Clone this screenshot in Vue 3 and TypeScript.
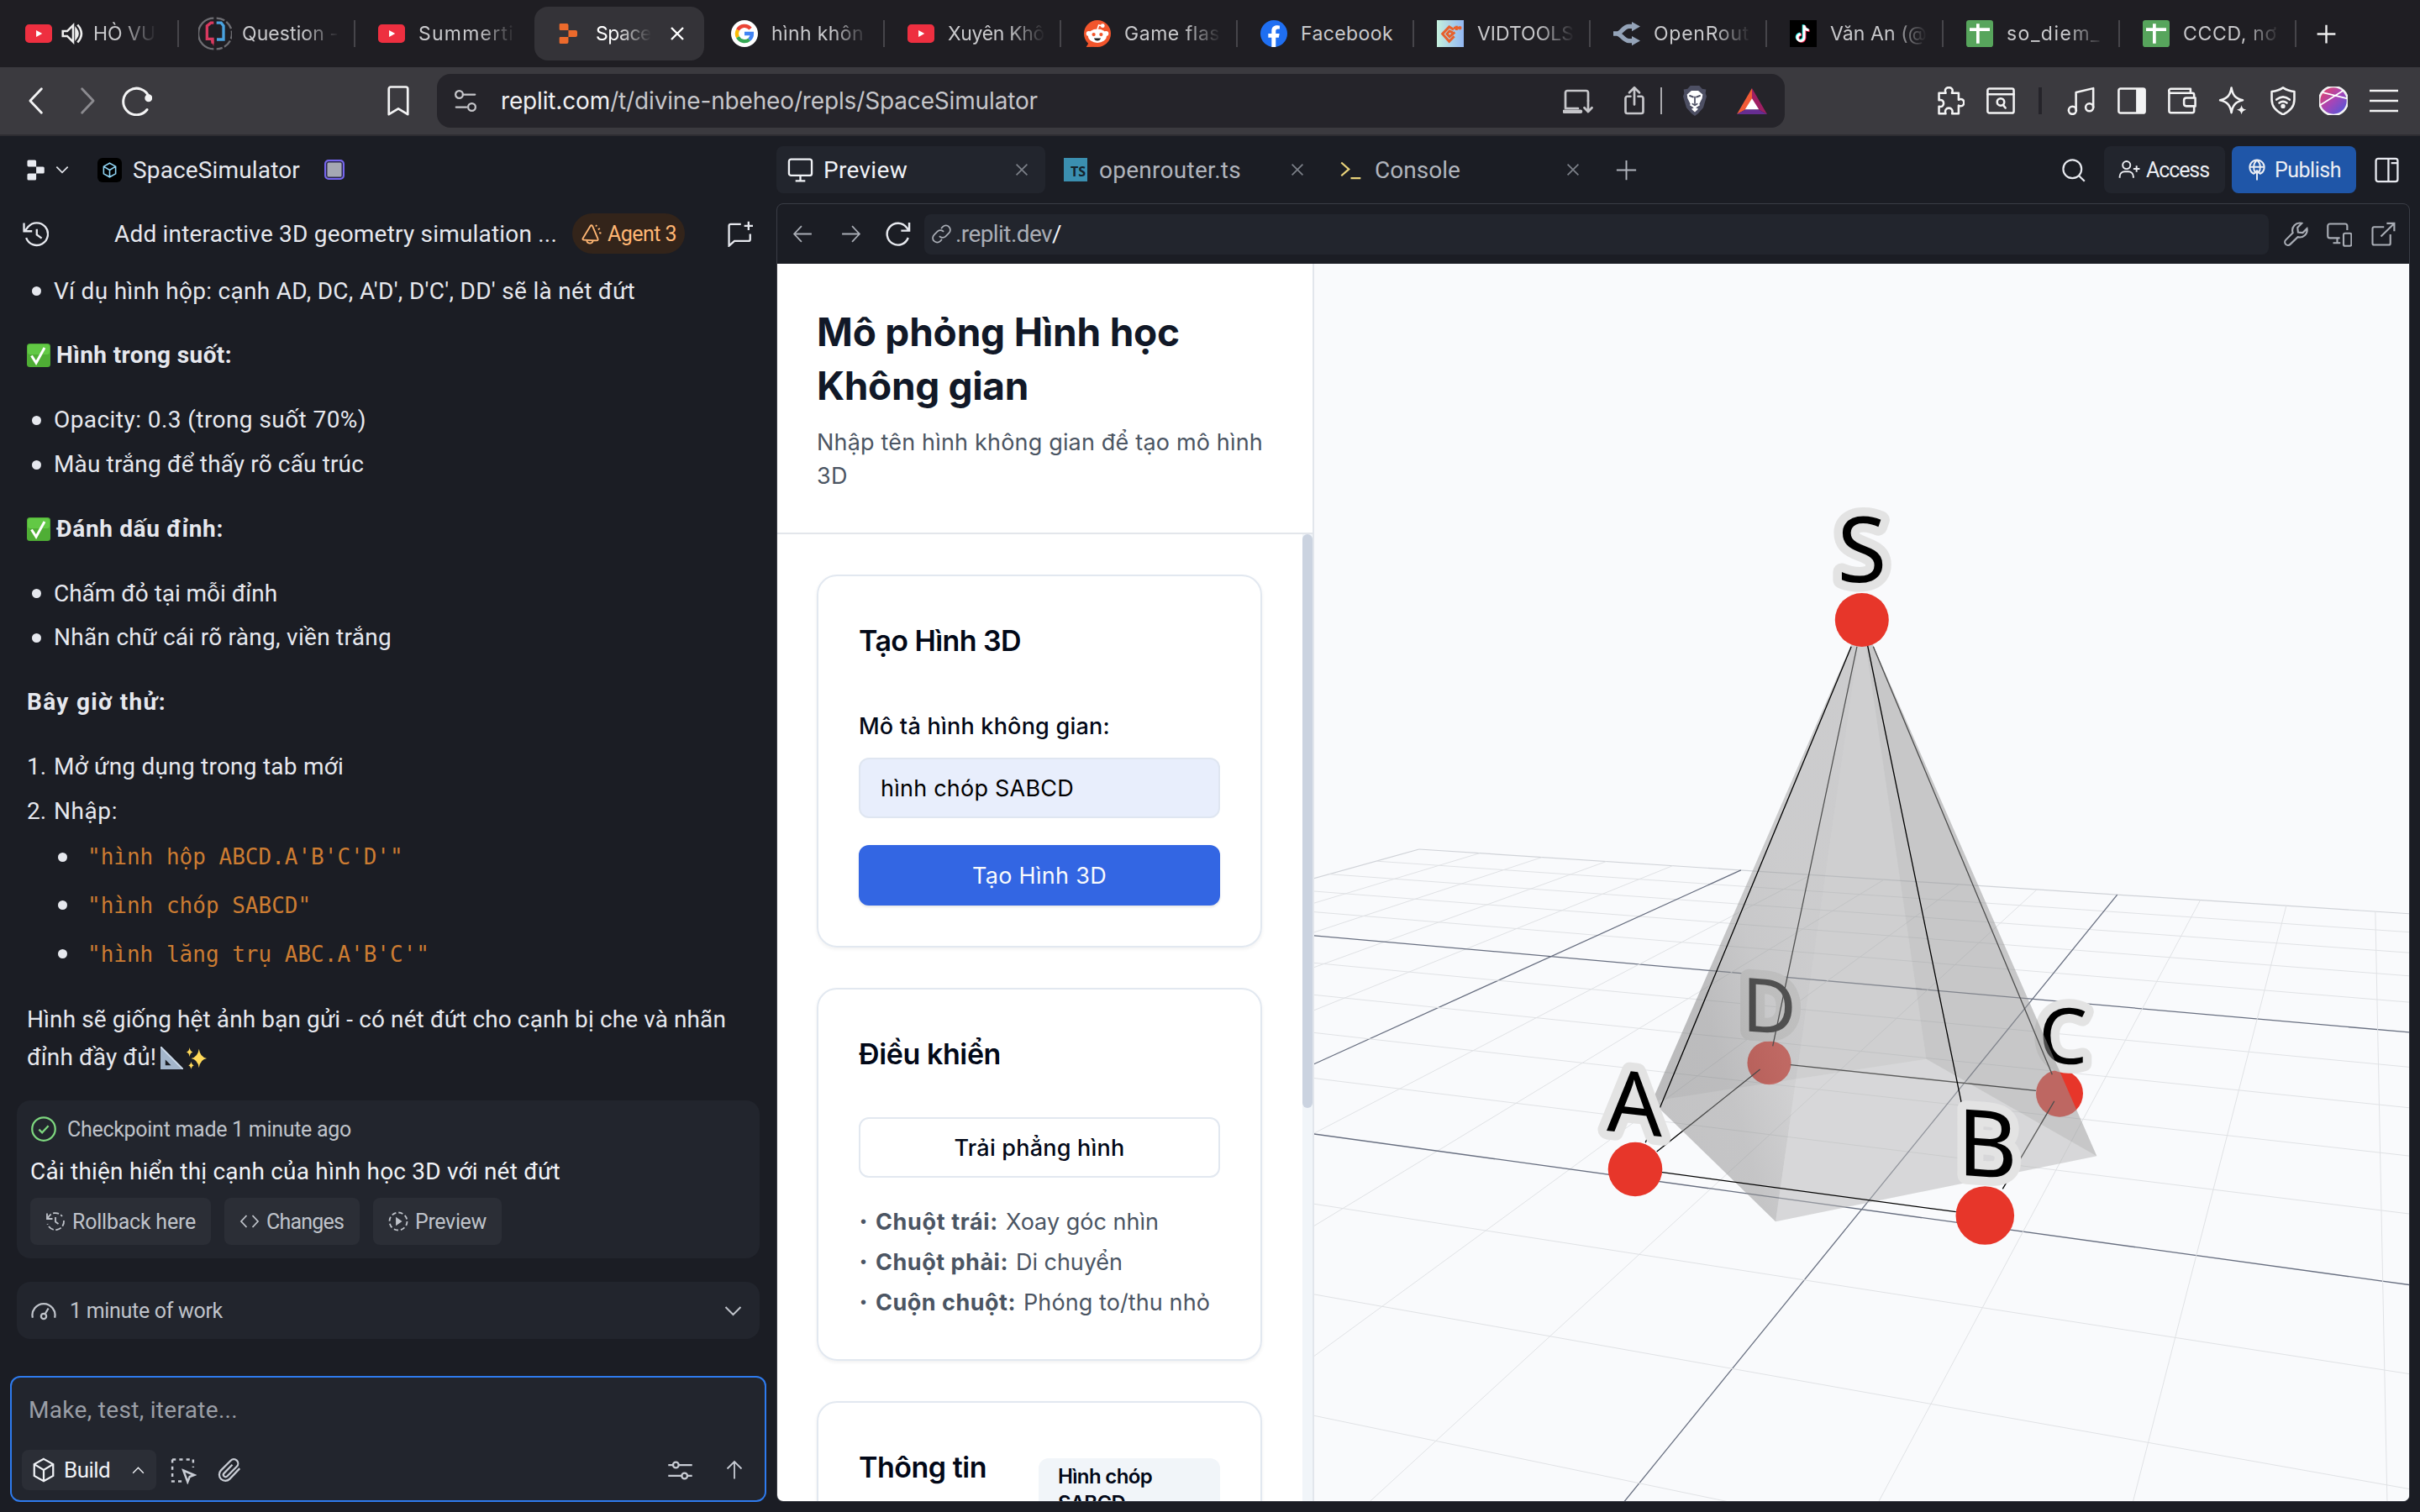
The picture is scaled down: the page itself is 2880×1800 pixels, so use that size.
<script setup lang="ts">
interface BrowserTab {
  icon: string
  title: string
  width: number
  active?: boolean
  sound?: boolean
  divider?: boolean
}

interface Point {
  x: number
  y: number
}

// Tightens or loosens tracking so a label occupies a known width.
const vFit = {
  mounted(el: HTMLElement, binding: { value: number }) {
    const count = Array.from(el.textContent ?? '').length
    const natural = el.getBoundingClientRect().width
    el.style.letterSpacing = `${((binding.value - natural) / count).toFixed(3)}px`
  },
}

const icons: Record<string, string> = {
  youtube:
    '<rect x="0" y="3.8" width="24" height="16.4" rx="3.4" fill="#ee2f40"/><path d="M9.8 9v6l5.400-3z" fill="#fff"/>',
  question:
    '<g fill="none" stroke-width="1.4"><path d="M11 1A11 11 0 0 0 11 23" stroke="#6e6e73"/><path d="M13 1a11 11 0 0 1 0 22" stroke="#6e6e73" stroke-dasharray="6 1.500"/><path d="M11 4.300H9l-2.800 2.200v9.300h4V19" stroke="#d8395f" stroke-width="2"/><path d="M13 4.300h3.300L18 6.500v9.700h-4.800" stroke="#4aa3e0" stroke-width="2"/></g><path d="M8.500 16H11v5z" fill="#d8395f"/>',
  replitOrange:
    '<path d="M4.500 3h5.600a1.500 1.500 0 0 1 1.500 1.500V9H4.500a1 1 0 0 1-1-1V4a1 1 0 0 1 1-1zM11.600 9H18a1.500 1.500 0 0 1 1.500 1.500v3A1.500 1.500 0 0 1 18 15h-6.400zM3.500 16a1 1 0 0 1 1-1h7.100v4.500a1.500 1.500 0 0 1-1.500 1.500H4.500a1 1 0 0 1-1-1z" fill="#ec6a2c"/>',
  google:
    '<circle cx="12" cy="12" r="12" fill="#fff"/><g fill="none" stroke-width="3.200"><path d="M17.300 7.600A6.800 6.800 0 0 0 6 8.800" stroke="#ea4335"/><path d="M6 8.800a6.800 6.800 0 0 0 0 6.400" stroke="#fbbc05"/><path d="M6 15.200a6.800 6.800 0 0 0 10.300 2.100" stroke="#34a853"/><path d="M16.300 17.300a6.600 6.600 0 0 0 2.400-5.300H12" stroke="#4285f4"/></g>',
  reddit:
    '<circle cx="12" cy="12" r="12" fill="#f2552c"/><path d="M2 24l3-5 6 4.800z" fill="#f2552c"/><circle cx="4.300" cy="12" r="2.300" fill="#fff"/><circle cx="19.700" cy="12" r="2.300" fill="#fff"/><ellipse cx="12" cy="14" rx="8.300" ry="6.200" fill="#fff"/><circle cx="8.700" cy="12.800" r="1.600" fill="#f2552c"/><circle cx="15.300" cy="12.800" r="1.600" fill="#f2552c"/><path d="M9 16.200h6q-.6 2.200-3 2.200t-3-2.200z" fill="#222"/><path d="M12 8l1.200-3.500 3 .6" stroke="#fff" fill="none" stroke-width="1.200"/><circle cx="16.700" cy="5" r="1.800" fill="#fff"/>',
  facebook:
    '<circle cx="12" cy="12" r="12" fill="#1f6ff2"/><path d="M10 24v-8.500H7V12h3V9.500c0-3.200 1.900-4.900 4.700-4.900 1.300 0 2.500.2 2.500.2v3h-1.500c-1.500 0-2 .9-2 1.900V12h3.300l-.6 3.500h-2.700V24z" fill="#fff"/>',
  vidtools:
    '<defs><linearGradient id="vid"><stop offset="0" stop-color="#c5f0dd"/><stop offset="1" stop-color="#93b7f2"/></linearGradient></defs><rect width="24" height="24" fill="url(#vid)"/><g fill="none" stroke="#e8602c" stroke-width="2.200"><path d="M15 8.500l-4-2.500-6 6.300 6 6.700 4.500-4.500"/><path d="M14 11l-2.800-1.200L9 12.300l2.300 2.500 4.700-4"/><path d="M15 7h7M17.500 5v4M20.500 5.500v3"/></g>',
  openrouter:
    '<path d="M0 12h3c4 0 6-6.500 11-6.500h4M3 12c4 0 6 6.500 11 6.500h4" fill="none" stroke="#94a3b8" stroke-width="4"/><path d="M16.500 1.500L24 5.700l-7.500 4.200zM16.500 14.200L24 18.400l-7.500 4.200z" fill="#94a3b8"/>',
  tiktok:
    '<rect width="24" height="24" fill="#000"/><g fill="none" stroke-width="2.200"><path d="M12.800 4.500v11a3 3 0 1 1-3-3M12.800 5c.3 2.500 2 3.800 4.200 3.900" stroke="#25f4ee" transform="translate(-.7 -.5)"/><path d="M12.800 4.500v11a3 3 0 1 1-3-3M12.800 5c.3 2.500 2 3.800 4.200 3.900" stroke="#fe2c55" transform="translate(.7 .5)"/><path d="M12.800 4.500v11a3 3 0 1 1-3-3M12.800 5c.3 2.500 2 3.800 4.200 3.900" stroke="#fff"/></g>',
  sheets:
    '<rect width="24" height="24" rx="2.500" fill="#57a55c"/><path d="M9 3.200h2.800v17.600H9zM3 7h18v2.800H3z" fill="#fff"/>',
  speaker:
    '<path d="M1.500 9.500H6l6-6v17l-6-6H1.500z"/><path d="M15 7.500q3.500 4.500 0 9z" fill="currentColor"/><path d="M16.500 3q8 9 0 18"/>',
  close: '<path d="M5 5l14 14M19 5L5 19"/>',
  plus: '<path d="M12 3v18M3 12h18"/>',
  chevLeft: '<path d="M16.500 2L7 12l9.500 10"/>',
  chevRight: '<path d="M7.500 2l9.500 10-9.500 10"/>',
  reload: '<path d="M20 19A10.500 10.500 0 1 1 21.500 9"/><circle cx="21.200" cy="9.800" r="2" fill="currentColor"/>',
  bookmark: '<path d="M4.500 2.500A1.500 1.500 0 0 1 6 1h12a1.500 1.500 0 0 1 1.500 1.500V22.800L12 18.300l-7.500 4.500z"/>',
  tune: '<circle cx="6" cy="6" r="3.500"/><path d="M9.500 6H21M3 18h10"/><circle cx="18" cy="18" r="3.500"/>',
  install: '<path d="M20 12V5.500A1.500 1.500 0 0 0 18.500 4h-15A1.500 1.500 0 0 0 2 5.500V18h10"/><path d="M1 20.500h13" stroke-width="3"/><path d="M20 12v8M17 17.500l3 3.200 3-3.200"/>',
  share: '<path d="M9 8.500H6.500A1.500 1.500 0 0 0 5 10v10.500A1.500 1.500 0 0 0 6.500 22h11a1.500 1.500 0 0 0 1.500-1.500V10a1.500 1.500 0 0 0-1.500-1.500H15"/><path d="M12 15V1.500M8 5.500l4-4 4 4"/>',
  brave:
    '<path d="M8 0h8l2.500 2.500L22 3l-.5 3 1 2.500-3 9L15 22l-3 2-3-2-4.500-4.500-3-9 1-2.500L2 3l3.500-.5z" fill="#4d4f63"/><path d="M9 4h6l4 3-.5 3-2.500 4.500.5 1-4.500 2.500-4.500-2.500.5-1L5.500 10 5 7z" fill="#fff"/><path d="M12 17l3 1.500-3 2.500-3-2.500z" fill="#fff"/><path d="M7.500 8l3 1M16.500 8l-3 1M12 9v5M10 14.500l2 1 2-1" stroke="#4d4f63" stroke-width="1.300" fill="none"/>',
  bat: '<path d="M12 0L0 24l7-4.500 5-9.500z" fill="#f25b36"/><path d="M12 0l12 24-7-4.500L12 10z" fill="#9e1f63"/><path d="M0 24h24l-7-4.500H7z" fill="#662d91"/><path d="M12 9.500l5.500 10h-11z" fill="#fff"/>',
  puzzle: '<path d="M2.500 5.500h5.700c-1.300-3 .3-4.700 2.600-4.700s3.900 1.700 2.600 4.700h5.600v5.600c2.800-1.200 4.500.2 4.500 2.400s-1.700 3.700-4.500 2.500V22.800h-5.500c1-3-.6-4.700-2.700-4.700s-3.700 1.700-2.700 4.700H2.500v-6c2.700.6 3.900-.9 3.900-2.700s-1.200-3.300-3.900-2.700z"/>',
  pageSearch: '<rect x="1" y="1.800" width="22" height="20.500" rx="1.500"/><path d="M1 6.500h22"/><circle cx="12" cy="13" r="3"/><path d="M14 15.500l2 2.500"/>',
  music: '<path d="M7.500 20V5L22 1.500v16"/><circle cx="4.500" cy="20" r="3.200"/><circle cx="18.800" cy="17.500" r="3.200"/>',
  sidePanel: '<rect x="1" y="1.800" width="22" height="20.500" rx="1.500"/><path d="M16.500 2.500h6v19h-6z" fill="currentColor"/>',
  wallet: '<path d="M22 9V7a1.500 1.500 0 0 0-1.500-1.500h-18A1.500 1.500 0 0 1 2.500 2H19v3.500M1 3.500v17A1.500 1.500 0 0 0 2.500 22h18a1.500 1.500 0 0 0 1.500-1.500V17"/><path d="M23 9.500h-7.500a2 2 0 0 0-2 2v3a2 2 0 0 0 2 2H23z"/>',
  sparkle: '<path d="M11 1c1 6.500 3.500 9 9.500 10.500-6 1.500-8.500 4-9.500 10.500-1-6.500-3.500-9-9.500-10.500C7.500 10 10 7.500 11 1z"/><path d="M19.500 15.500c.5 2.500 1.500 3.500 4 4-2.500.5-3.500 1.500-4 4-.5-2.500-1.500-3.500-4-4 2.500-.5 3.500-1.500 4-4z" fill="currentColor" stroke="none"/>',
  vpn: '<path d="M12 1c3 2 6 3 9.500 3.200V11c0 6-4 10-9.500 12.500C6.500 21 2.500 17 2.500 11V4.200C6 4 9 3 12 1z"/><path d="M6.500 11q5.500-4.500 11 0M8.800 13.800q3.200-2.400 6.400 0"/><circle cx="12" cy="16.500" r="1" fill="currentColor"/>',
  avatar:
    '<defs><linearGradient id="av" x1="0" y1="0" x2="1" y2="1"><stop offset=".1" stop-color="#e0456a"/><stop offset=".5" stop-color="#a545b8"/><stop offset="1" stop-color="#3d5be0"/></linearGradient></defs><circle cx="12" cy="12" r="12" fill="url(#av)"/><path d="M1 15.500L20 3.500M3 5l20 5" stroke="#fff" stroke-width="1.200" fill="none"/>',
  menu: '<path d="M0 3.500h24M0 12h24M0 20.500h24"/>',
  replitWhite:
    '<path d="M5 2h6.200a1.300 1.300 0 0 1 1.300 1.300v5.300H5a1.300 1.300 0 0 1-1.300-1.300v-4A1.300 1.300 0 0 1 5 2zM12.500 8.600h6.700a1.300 1.300 0 0 1 1.300 1.300v4.200a1.300 1.300 0 0 1-1.300 1.300h-6.700zM3.700 16.700A1.300 1.300 0 0 1 5 15.400h7.500v5.300a1.300 1.300 0 0 1-1.300 1.300H5a1.300 1.300 0 0 1-1.300-1.300z" fill="#e8eaf0" stroke="none"/>',
  chevDown: '<path d="M4 8l8 8 8-8"/>',
  chevUp: '<path d="M4 16l8-8 8 8"/>',
  cube: '<path d="M12 1.500l9 5v11l-9 5-9-5v-11zM3 6.500l9 5.500 9-5.500M12 12v10.500"/>',
  monitor: '<rect x="1.500" y="2" width="21" height="15" rx="2"/><path d="M12 17v5M7.500 22h9"/>',
  prompt: '<path d="M2 4l8 7-8 7M12 20.500h10.500"/>',
  search: '<circle cx="11" cy="11" r="9"/><path d="M17.500 17.500L23 23"/>',
  userPlus: '<circle cx="9" cy="7" r="4.200"/><path d="M1.500 21v-1.500A5.500 5.500 0 0 1 7 14h4a5.500 5.500 0 0 1 5.500 5.500V21M20 7.500v7M16.500 11h7"/>',
  publish: '<path d="M9 16.800A8 8 0 1 1 15 16.800M4.500 9h15M12 1.200c-4.500 4.500-4.500 10.500-1.500 15M12 1.200c4.500 4.500 4.500 10.500 1.500 15M12 23.500V13M8.500 16.500L12 13l3.500 3.500"/>',
  layout: '<rect x="2" y="1.500" width="20" height="21" rx="2"/><path d="M13.500 1.500v21M16 5.500h6"/>',
  arrowLeft: '<path d="M22 12H2.500M10.500 3L2 12l8.500 9"/>',
  arrowRight: '<path d="M2 12h19.500M13.500 3l8.500 9-8.500 9"/>',
  refresh: '<path d="M21.500 15.500A10 10 0 1 1 20 6l2.500 3M22.500 1.500V9H15"/>',
  link: '<path d="M9.500 14.500a5 5 0 0 0 7 .5l4-4a5 5 0 0 0-7-7.200l-2 2M14.500 9.500a5 5 0 0 0-7-.5l-4 4a5 5 0 0 0 7 7.200l2-2"/>',
  wrench: '<path d="M22 6.500l-4 4-4.500-.5L13 5.500l4-4a7 7 0 0 0-8.500 9L1.800 17.300a3 3 0 0 0 0 4.200 3 3 0 0 0 4.200 0l7.200-7A7 7 0 0 0 22 6.500z"/>',
  devices: '<path d="M19.500 8V4A2 2 0 0 0 17.500 2H3a2 2 0 0 0-2 2v9.500a2 2 0 0 0 2 2h9.500M10 15.500V20M6 20.200h7"/><rect x="16" y="11" width="7.500" height="12" rx="1.500"/>',
  external: '<path d="M13 5H3.500A1.500 1.500 0 0 0 2 6.500v14A1.500 1.500 0 0 0 3.500 22h14a1.500 1.500 0 0 0 1.500-1.500V12M10 14L22.500 1.800M15.500 1.500h7.200V9"/>',
  history: '<path d="M2 9.300L5 5.500A10.300 10.300 0 1 1 3.200 15.500M1.200 2v7.500h7.500M13 7.500v5.200l4.500 3.300"/>',
  rollback: '<path d="M2.500 9A10 10 0 0 1 20 6M22 11a10 10 0 0 1-19.500 4" stroke-dasharray="7 2.500"/><path d="M2 2.500V9h6.500M12 7v5.500l3.500 2.500"/>',
  agent: '<path d="M12.500 2.800c-.6-.9-1.700-.9-2.300 0L1.600 17c-.6 1 0 1.800 1 1.800l14.800.7c1.200 0 1.800-1 1.300-2zM6 19.200c.2 4.300 6.300 4.800 7.200.3M16.500 3.500l.8-1.800M19 7l2-1.300M20.300 10.800l2.200.2"/>',
  newChat: '<path d="M13 3H3.500A1.500 1.500 0 0 0 2 4.500V23l5-4.500h13a1.500 1.500 0 0 0 1.500-1.500v-5M20 .5v8M16 4.500h8"/>',
  checkCircle: '<circle cx="12" cy="12" r="11"/><path d="M7.500 12.500l3 3 6-6.500"/>',
  code: '<path d="M8.500 5L2 12l6.500 7M15.500 5l6.500 7-6.500 7"/>',
  playDash: '<circle cx="12" cy="12" r="10.500" stroke-dasharray="5.200 3.050"/><path d="M10 8.500l5 3.500-5 3.500z" fill="currentColor"/>',
  gauge: '<path d="M1.500 19A10.800 10.800 0 1 1 22.500 19"/><circle cx="12" cy="17.500" r="2.500"/><path d="M13.500 15L16.500 10"/>',
  select: '<path d="M3 2.500h18v7M3 2.500v19h9" stroke-dasharray="3 3"/><path d="M12.500 12l9.500 4-4 1.500-1.800 4.500z"/>',
  clip: '<path d="M21 10.500l-9.500 10a5.800 5.800 0 0 1-8.300-8.200L12.500 3a4 4 0 0 1 5.800 5.600L9 18a2 2 0 0 1-2.900-2.900L14 7"/>',
  sliders: '<path d="M1 7h4.500M10.500 7H23M1 17h12.500M18.500 17H23"/><circle cx="8" cy="7" r="2.600"/><circle cx="16" cy="17" r="2.600"/>',
  arrowUp: '<path d="M12 22.500V2M3.500 10.500L12 2l8.500 8.500"/>',
}

const tabs: BrowserTab[] = [
  { icon: 'youtube', title: 'HÒ VU', width: 74, sound: true, divider: true },
  { icon: 'question', title: 'Question -', width: 115, divider: true },
  { icon: 'youtube', title: 'Summerti', width: 114 },
  { icon: 'replitOrange', title: 'Space', width: 66, active: true },
  { icon: 'google', title: 'hình khôn', width: 110, divider: true },
  { icon: 'youtube', title: 'Xuyên Khô', width: 115, divider: true },
  { icon: 'reddit', title: 'Game flas', width: 114, divider: true },
  { icon: 'facebook', title: 'Facebook', width: 110, divider: true },
  { icon: 'vidtools', title: 'VIDTOOLS', width: 115, divider: true },
  { icon: 'openrouter', title: 'OpenRout', width: 114, divider: true },
  { icon: 'tiktok', title: 'Văn An (@', width: 115, divider: true },
  { icon: 'sheets', title: 'so_diem_', width: 112, divider: true },
  { icon: 'sheets', title: 'CCCD, nơ', width: 112, divider: true },
]

const browserTools = ['music', 'sidePanel', 'wallet', 'sparkle', 'vpn', 'avatar', 'menu']

const codes = [
  { text: '"hình hộp ABCD.A\'B\'C\'D\'"' },
  { text: '"hình chóp SABCD"' },
  { text: '"hình lăng trụ ABC.A\'B\'C\'"' },
]

const hints = [
  { key: 'Chuột trái:', keyWidth: 146, text: 'Xoay góc nhìn', width: 182 },
  { key: 'Chuột phải:', keyWidth: 158, text: 'Di chuyển', width: 127 },
  { key: 'Cuộn chuột:', keyWidth: 167, text: 'Phóng to/thu nhỏ', width: 222 },
]

// Perspective projection of the ground plane into stage coordinates.
const STAGE_X = 1564
const STAGE_Y = 314

function depth(u: number, v: number): number {
  return 1 - 0.01449 * u - 0.0431 * v
}

function project(u: number, v: number): Point {
  const w = depth(u, v)
  return {
    x: (46.58 * u - 121.5 * v + 1688.8) / w - STAGE_X,
    y: (-10.02 * u - 30.02 * v + 1011) / w - STAGE_Y,
  }
}

const gridLines = Array.from({ length: 21 }, (_, i) => i).flatMap((i) => {
  const vMax = Math.min(20, (1 - 0.01449 * i - 0.03) / 0.0431)
  const uMax = Math.min(20, (1 - 0.0431 * i - 0.03) / 0.01449)
  return [
    { a: project(i, 0), b: project(i, vMax), major: i % 5 === 0, key: `u${i}`, edge: i === 0 },
    { a: project(0, i), b: project(uMax, i), major: i % 5 === 0, key: `v${i}`, edge: i === 0 },
  ]
})
</script>

<template>
  <div class="screen">
    <div class="tabstrip">
      <div v-for="(t, i) in tabs" :key="i" class="btab" :class="{ active: t.active, divided: t.divider }">
        <svg class="fav" :class="{ big: t.icon === 'question' }" viewBox="0 0 24 24" v-html="icons[t.icon]"></svg>
        <svg v-if="t.sound" class="ic sound" viewBox="0 0 24 24" v-html="icons.speaker"></svg>
        <span class="btitle" :class="{ fade: t.icon !== 'facebook' }"><span v-fit="t.width" class="fit">{{ t.title }}</span></span>
        <svg v-if="t.active" class="ic bclose" viewBox="0 0 24 24" v-html="icons.close"></svg>
      </div>
      <svg class="ic newtab" viewBox="0 0 24 24" v-html="icons.plus"></svg>
    </div>

    <div class="toolbar">
      <svg class="ic t-back" viewBox="0 0 24 24" v-html="icons.chevLeft"></svg>
      <svg class="ic t-fwd" viewBox="0 0 24 24" v-html="icons.chevRight"></svg>
      <svg class="ic t-reload" viewBox="0 0 24 24" v-html="icons.reload"></svg>
      <svg class="ic t-mark" viewBox="0 0 24 24" v-html="icons.bookmark"></svg>
      <div class="omnibox">
        <svg class="ic o-tune" viewBox="0 0 24 24" v-html="icons.tune"></svg>
        <span v-fit="639" class="fit url"><b>replit.com</b>/t/divine-nbeheo/repls/SpaceSimulator</span>
        <svg class="ic o-install" viewBox="0 0 24 24" v-html="icons.install"></svg>
        <svg class="ic o-share" viewBox="0 0 24 24" v-html="icons.share"></svg>
        <i class="o-sep"></i>
        <svg class="o-brave" viewBox="0 0 24 24" preserveAspectRatio="none" v-html="icons.brave"></svg>
        <svg class="o-bat" viewBox="0 0 24 24" preserveAspectRatio="none" v-html="icons.bat"></svg>
      </div>
      <div class="tools">
        <svg class="ic tool" viewBox="0 0 24 24" v-html="icons.puzzle"></svg>
        <svg class="ic tool" viewBox="0 0 24 24" v-html="icons.pageSearch"></svg>
        <i class="tool-sep"></i>
        <svg v-for="n in browserTools" :key="n" class="ic tool" viewBox="0 0 24 24" v-html="icons[n]"></svg>
      </div>
    </div>

    <div class="workspace">
      <section class="left">
        <header class="app-head">
          <svg class="ic rlogo" viewBox="0 0 24 24" v-html="icons.replitWhite"></svg>
          <svg class="ic rchev" viewBox="0 0 24 24" v-html="icons.chevDown"></svg>
          <span class="app-icon"><svg class="ic" viewBox="0 0 24 24" v-html="icons.cube"></svg></span>
          <span v-fit="199" class="fit t28">SpaceSimulator</span>
          <i class="chip"></i>
        </header>
        <header class="chat-head">
          <svg class="ic c-hist" viewBox="0 0 24 24" v-html="icons.history"></svg>
          <span v-fit="527" class="fit t28 c-title">Add interactive 3D geometry simulation ...</span>
          <span class="agent">
            <svg class="ic" viewBox="0 0 24 24" v-html="icons.agent"></svg>
            <span v-fit="82" class="fit">Agent 3</span>
          </span>
          <svg class="ic c-new" viewBox="0 0 24 24" v-html="icons.newChat"></svg>
        </header>

        <div class="message">
          <ul class="bul">
            <li><span v-fit="692" class="fit">Ví dụ hình hộp: cạnh AD, DC, A'D', D'C', DD' sẽ là nét đứt</span></li>
          </ul>
          <p class="head">
            <svg class="tick" viewBox="0 0 28 28"><rect width="28" height="28" rx="3.5" fill="#4fae35" /><rect x="1" y="1" width="26" height="12" rx="3" fill="#62c945" /><path d="M5.500 14.500l5.500 8.500L21 5" fill="none" stroke="#fff" stroke-width="3" /></svg><b v-fit="209" class="fit">Hình trong suốt:</b>
          </p>
          <ul class="bul">
            <li><span v-fit="372" class="fit">Opacity: 0.3 (trong suốt 70%)</span></li>
            <li><span v-fit="369" class="fit">Màu trắng để thấy rõ cấu trúc</span></li>
          </ul>
          <p class="head">
            <svg class="tick" viewBox="0 0 28 28"><rect width="28" height="28" rx="3.5" fill="#4fae35" /><rect x="1" y="1" width="26" height="12" rx="3" fill="#62c945" /><path d="M5.500 14.500l5.500 8.500L21 5" fill="none" stroke="#fff" stroke-width="3" /></svg><b v-fit="199" class="fit">Đánh dấu đỉnh:</b>
          </p>
          <ul class="bul">
            <li><span v-fit="266" class="fit">Chấm đỏ tại mỗi đỉnh</span></li>
            <li><span v-fit="402" class="fit">Nhãn chữ cái rõ ràng, viền trắng</span></li>
          </ul>
          <p class="head"><b v-fit="166" class="fit">Bây giờ thử:</b></p>
          <ol class="num">
            <li><span class="n">1.</span><span v-fit="345" class="fit">Mở ứng dụng trong tab mới</span></li>
            <li><span class="n">2.</span><span v-fit="76" class="fit">Nhập:</span></li>
          </ol>
          <ul class="codes">
            <li v-for="c in codes" :key="c.text"><code>{{ c.text }}</code></li>
          </ul>
          <p class="head">
            <span v-fit="832" class="fit">Hình sẽ giống hệt ảnh bạn gửi - có nét đứt cho cạnh bị che và nhãn</span>
          </p>
          <p class="tail">
            <span v-fit="154" class="fit">đỉnh đầy đủ!</span>
            <svg class="ruler" viewBox="0 0 28 28"><path d="M0 0v28h28zM6 16l7 7H6z" fill="#a3b5cb" fill-rule="evenodd" /><path d="M0 0l28 28" stroke="#cfdcec" stroke-width="2" /></svg>
            <svg class="stars" viewBox="0 0 28 28"><path d="M17 2q1.500 10.500 10 12-8.500 1.500-10 12-1.500-10.500-10-12 8.500-1.500 10-12zM5 0q.7 5 4 6-3.300 1-4 6-.7-5-4-6 3.300-1 4-6zM7 18q.6 4 3.500 5-2.900 1-3.500 5-.6-4-3.500-5 2.900-1 3.500-5z" fill="#ffd95a" /></svg>
          </p>
        </div>

        <article class="checkpoint">
          <div class="cp-row">
            <svg class="ic green" viewBox="0 0 24 24" v-html="icons.checkCircle"></svg>
            <span v-fit="338" class="fit">Checkpoint made 1 minute ago</span>
          </div>
          <div class="cp-title"><span v-fit="631" class="fit">Cải thiện hiển thị cạnh của hình học 3D với nét đứt</span></div>
          <div class="cp-actions">
            <button class="b1"><svg class="ic" viewBox="0 0 24 24" v-html="icons.rollback"></svg><span v-fit="147" class="fit">Rollback here</span></button>
            <button class="b2"><svg class="ic" viewBox="0 0 24 24" v-html="icons.code"></svg><span v-fit="92" class="fit">Changes</span></button>
            <button class="b3"><svg class="ic" viewBox="0 0 24 24" v-html="icons.playDash"></svg><span v-fit="85" class="fit">Preview</span></button>
          </div>
        </article>

        <div class="work">
          <svg class="ic" viewBox="0 0 24 24" v-html="icons.gauge"></svg>
          <span v-fit="182" class="fit">1 minute of work</span>
          <svg class="ic w-chev" viewBox="0 0 24 24" v-html="icons.chevDown"></svg>
        </div>

        <div class="composer">
          <div class="ph"><span v-fit="249" class="fit">Make, test, iterate...</span></div>
          <div class="cbar">
            <span class="build">
              <svg class="ic" viewBox="0 0 24 24" v-html="icons.cube"></svg>
              <span v-fit="55" class="fit">Build</span>
              <svg class="ic caret" viewBox="0 0 24 24" v-html="icons.chevUp"></svg>
            </span>
            <svg class="ic i-sel" viewBox="0 0 24 24" v-html="icons.select"></svg>
            <svg class="ic i-clip" viewBox="0 0 24 24" v-html="icons.clip"></svg>
            <svg class="ic i-slid" viewBox="0 0 24 24" v-html="icons.sliders"></svg>
            <svg class="ic i-up" viewBox="0 0 24 24" v-html="icons.arrowUp"></svg>
          </div>
        </div>
      </section>

      <section class="right">
        <header class="pane-tabs">
          <div class="ptab on">
            <svg class="ic p-mon" viewBox="0 0 24 24" v-html="icons.monitor"></svg>
            <span v-fit="100" class="fit">Preview</span>
            <svg class="ic p-x" viewBox="0 0 24 24" v-html="icons.close"></svg>
          </div>
          <div class="ptab">
            <span class="ts">TS</span>
            <span v-fit="169" class="fit">openrouter.ts</span>
            <svg class="ic p-x" viewBox="0 0 24 24" v-html="icons.close"></svg>
          </div>
          <div class="ptab">
            <svg class="ic p-con" viewBox="0 0 24 24" v-html="icons.prompt"></svg>
            <span v-fit="102" class="fit">Console</span>
            <svg class="ic p-x" viewBox="0 0 24 24" v-html="icons.close"></svg>
          </div>
          <svg class="ic p-plus" viewBox="0 0 24 24" v-html="icons.plus"></svg>
          <svg class="ic p-search" viewBox="0 0 24 24" v-html="icons.search"></svg>
          <button class="access"><svg class="ic" viewBox="0 0 24 24" v-html="icons.userPlus"></svg><span v-fit="75" class="fit">Access</span></button>
          <button class="publish"><svg class="ic" viewBox="0 0 24 24" v-html="icons.publish"></svg><span v-fit="79" class="fit">Publish</span></button>
          <svg class="ic p-lay" viewBox="0 0 24 24" v-html="icons.layout"></svg>
        </header>

        <div class="pane">
          <div class="pbar">
            <svg class="ic n1" viewBox="0 0 24 24" v-html="icons.arrowLeft"></svg>
            <svg class="ic n2" viewBox="0 0 24 24" v-html="icons.arrowRight"></svg>
            <svg class="ic n3" viewBox="0 0 24 24" v-html="icons.refresh"></svg>
            <div class="addr">
              <svg class="ic" viewBox="0 0 24 24" v-html="icons.link"></svg>
              <span v-fit="126" class="fit">.replit.dev<b>/</b></span>
            </div>
            <svg class="ic n4" viewBox="0 0 24 24" v-html="icons.wrench"></svg>
            <svg class="ic n5" viewBox="0 0 24 24" v-html="icons.devices"></svg>
            <svg class="ic n6" viewBox="0 0 24 24" v-html="icons.external"></svg>
          </div>

          <div class="webview">
            <aside class="side">
              <div class="intro">
                <h1><span v-fit="432" class="fit">Mô phỏng Hình học</span><br /><span v-fit="252" class="fit">Không gian</span></h1>
                <p><span v-fit="531" class="fit">Nhập tên hình không gian để tạo mô hình</span><br /><span v-fit="37" class="fit">3D</span></p>
              </div>
              <div class="scroll">
                <div class="cards">
                  <div class="card">
                    <h2><span v-fit="193" class="fit">Tạo Hình 3D</span></h2>
                    <label><span v-fit="299" class="fit">Mô tả hình không gian:</span></label>
                    <div class="field"><span v-fit="230" class="fit">hình chóp SABCD</span></div>
                    <button class="primary"><span v-fit="160" class="fit">Tạo Hình 3D</span></button>
                  </div>
                  <div class="card">
                    <h2><span v-fit="169" class="fit">Điều khiển</span></h2>
                    <button class="outline"><span v-fit="203" class="fit">Trải phẳng hình</span></button>
                    <ul class="hints">
                      <li v-for="h in hints" :key="h.key">
                        <i>•</i><b v-fit="h.keyWidth" class="fit">{{ h.key }}</b><span v-fit="h.width" class="fit">{{ h.text }}</span>
                      </li>
                    </ul>
                  </div>
                  <div class="card last">
                    <h2><span v-fit="152" class="fit">Thông tin</span></h2>
                    <div class="badge"><span v-fit="112" class="fit">Hình chóp</span><br /><span v-fit="80" class="fit">SABCD</span></div>
                  </div>
                </div>
                <div class="rail"><i></i></div>
              </div>
            </aside>

            <svg class="stage" viewBox="0 0 1303 1473">
              <defs>
                <linearGradient id="frontLeft" gradientUnits="userSpaceOnUse" x1="410" y1="960" x2="610" y2="900" gradientTransform="translate(1564 314)">
                  <stop offset="0" stop-color="#6a6a6a" />
                  <stop offset=".35" stop-color="#6e6e6e" />
                  <stop offset=".7" stop-color="#969696" />
                  <stop offset="1" stop-color="#a2a2a2" />
                </linearGradient>
              </defs>
              <line
                v-for="l in gridLines"
                :key="l.key"
                :x1="l.a.x"
                :y1="l.a.y"
                :x2="l.b.x"
                :y2="l.b.y"
                :class="l.edge ? 'edge' : l.major ? 'major' : 'minor'"
              />
              <g transform="translate(-1564 -314)">
                <circle cx="2105.5" cy="1265.200" r="26" class="dot" />
                <circle cx="2451" cy="1301.700" r="28" class="dot" />
                <text class="vl" font-size="89" transform="matrix(1 .07 0 1 2105.5 1229.500)">D</text>
                <text class="vl" font-size="92" transform="matrix(1 .03 0 1 2455 1266)">C</text>
                <path class="wire" d="M2209.900 769.800L2109.700 1245.300M2229.300 769.800L2442.300 1279.300M2094.600 1273.100L1971.700 1371M2130.800 1267.700L2422.900 1298.400M2444.800 1310.800L2383.300 1415.300" />
                <g fill-opacity=".3">
                  <path d="M1966 1311L2292.400 1260.700L2495.300 1376.300L2113.100 1454.300z" fill="#c8c8c8" />
                  <path d="M2216 738L1966 1311L2292.400 1260.700z" fill="#9f9f9f" />
                  <path d="M2216 738L2292.400 1260.700L2495.300 1376.300z" fill="#7c7c7c" />
                  <path d="M2216 738L1966 1311L2113.100 1454.300z" fill="url(#frontLeft)" />
                  <path d="M2216 738L2113.100 1454.300L2495.300 1376.300z" fill="#adadad" />
                </g>
                <path class="wire" d="M2203.200 769.800L1958.200 1360.200M2222.500 768L2340 1341M1976.700 1395.400L2327.800 1442.700" />
                <circle cx="2215.800" cy="738" r="32" class="dot" />
                <circle cx="1946" cy="1392" r="32.300" class="dot" />
                <circle cx="2362.300" cy="1447" r="34.800" class="dot" />
                <text class="vl" font-size="107" x="2215.800" y="693">S</text>
                <text class="vl" font-size="103" transform="matrix(1 .11 0 1 1944.800 1349.500)">A</text>
                <text class="vl" font-size="110" transform="matrix(1 .07 0 1 2365 1401)">B</text>
              </g>
            </svg>
          </div>
        </div>
      </section>
    </div>
  </div>
</template>

<style>
body {
  margin: 0;
  background: #1b1d24;
}
</style>

<style scoped>
* {
  box-sizing: border-box;
}
.screen {
  width: 2880px;
  height: 1800px;
  overflow: hidden;
  background: #1b1d24;
  font-family: Roboto, "Noto Sans", sans-serif;
  color: #e6e8ee;
}
svg {
  flex: none;
  display: block;
}
.ic {
  fill: none;
  stroke: currentColor;
  stroke-width: 1.8;
}
.fit {
  display: inline-block;
  white-space: nowrap;
  flex: none;
}
button {
  border: 0;
  padding: 0;
  font: inherit;
  color: inherit;
  display: flex;
  align-items: center;
}
h1,
h2,
p,
ul,
ol {
  margin: 0;
  padding: 0;
  list-style: none;
}

/* Browser chrome */
.tabstrip {
  height: 80px;
  background: #1f1e23;
  display: flex;
  align-items: center;
  padding-left: 3px;
  font: 23px Inter, sans-serif;
  color: #c9c9cc;
}
.btab {
  width: 210px;
  height: 80px;
  flex: none;
  display: flex;
  align-items: center;
  padding-left: 27px;
  background: linear-gradient(#46454a, #46454a) no-repeat right 0 center / 0 0;
}
.btab.divided {
  background-size: 2px 32px;
}
.btab.active {
  width: 202px;
  height: 64px;
  margin: 0 5px 0 3px;
  border-radius: 16px;
  background: #343338;
  color: #fff;
  padding-left: 25px;
}
.fav {
  width: 32px;
  height: 32px;
}
.fav.big {
  width: 40px;
  height: 40px;
  margin: 0 -4px;
}
.sound {
  width: 28px;
  height: 28px;
  margin-left: 11px;
  margin-right: -6px;
  color: #eee;
  stroke-width: 2.2;
}
.btitle {
  margin-left: 16px;
  width: 116px;
  overflow: hidden;
  white-space: nowrap;
}
.sound + .btitle {
  width: 76px;
}
.btitle.fade {
  -webkit-mask-image: linear-gradient(90deg, #000 calc(100% - 44px), transparent);
  mask-image: linear-gradient(90deg, #000 calc(100% - 44px), transparent);
}
.active .btitle {
  width: 66px;
}
.bclose {
  width: 24px;
  height: 24px;
  margin-left: 19px;
  stroke-width: 2.4;
}
.newtab {
  width: 29px;
  height: 29px;
  margin-left: 21px;
  color: #eee;
  stroke-width: 2;
}
.toolbar {
  height: 82px;
  background: #3b3a3f;
  border-bottom: 2px solid #2d2c31;
  display: flex;
  align-items: center;
  color: #f3f3f4;
  stroke-linecap: round;
  stroke-linejoin: round;
}
.t-back,
.t-fwd {
  width: 34px;
  height: 34px;
  stroke-width: 2;
}
.t-back {
  margin-left: 26px;
}
.t-fwd {
  margin-left: 27px;
  color: #8c8b90;
}
.t-reload {
  width: 36px;
  height: 36px;
  margin-left: 24px;
  stroke-width: 2;
}
.t-mark {
  width: 36px;
  height: 36px;
  margin-left: 275px;
}
.omnibox {
  width: 1604px;
  height: 64px;
  margin-left: 28px;
  border-radius: 16px;
  background: #25242a;
  display: flex;
  align-items: center;
  font: 28px Inter, sans-serif;
  color: #c6c6ca;
}
.omnibox b {
  font-weight: 400;
  color: #f0f0f2;
}
.o-tune {
  width: 30px;
  height: 30px;
  margin: 0 27px 0 19px;
}
.o-install {
  width: 36px;
  height: 36px;
  margin-left: 625px;
}
.o-share {
  width: 36px;
  height: 36px;
  margin-left: 31px;
}
.o-sep {
  width: 2px;
  height: 32px;
  background: #a9a9ad;
  margin-left: 13px;
}
.o-brave {
  width: 32px;
  height: 36px;
  margin-left: 23px;
}
.o-bat {
  width: 36px;
  height: 31px;
  margin-left: 34px;
}
.tools {
  display: flex;
  align-items: center;
  margin-left: 180px;
}
.tool {
  width: 34px;
  height: 34px;
  margin-right: 26px;
}
.tool-sep {
  width: 4px;
  height: 32px;
  background: #25242a;
  margin: 0 30px 0 2px;
}

/* Replit chat column */
.workspace {
  display: flex;
  height: 1638px;
}
.left {
  width: 924px;
  flex: none;
  display: flex;
  flex-direction: column;
}
.t28 {
  font-size: 28px;
}
.app-head {
  height: 80px;
  display: flex;
  align-items: center;
}
.rlogo {
  width: 29px;
  height: 29px;
  margin-left: 28px;
}
.rchev {
  width: 20px;
  height: 20px;
  margin-left: 7px;
  stroke-width: 2;
}
.app-icon {
  width: 29px;
  height: 29px;
  margin: 0 13px 0 32px;
  border-radius: 6px;
  background: #000;
  color: #8fd3f2;
  display: flex;
  align-items: center;
  justify-content: center;
}
.app-icon svg {
  width: 19px;
  height: 19px;
  stroke-width: 2;
}
.chip {
  width: 24px;
  height: 24px;
  margin-left: 29px;
  border: 2px solid #7565ee;
  border-radius: 5px;
  background: #a5a8b3;
  box-shadow: inset 0 0 0 1.5px #2a2750;
}
.chat-head {
  height: 72px;
  display: flex;
  align-items: center;
}
.c-hist {
  width: 31px;
  height: 31px;
  margin-left: 27px;
}
.c-title {
  margin-left: 78px;
}
.agent {
  width: 134px;
  height: 48px;
  margin-left: 18px;
  border-radius: 24px;
  background: #33241a;
  color: #ffb673;
  display: flex;
  align-items: center;
  font-size: 25px;
}
.agent svg {
  width: 25px;
  height: 25px;
  margin: 0 6px 0 11px;
}
.c-new {
  width: 31px;
  height: 31px;
  margin-left: 50px;
}
.message {
  padding: 10.6px 0 0 32px;
  font-size: 28px;
  line-height: 44.8px;
  display: flex;
  flex-direction: column;
  gap: 32px;
  height: 987px;
}
.bul,
.num {
  display: flex;
  flex-direction: column;
  gap: 8px;
}
.message li,
.message p {
  display: flex;
  align-items: center;
  height: 44.8px;
}
.bul li::before,
.codes li::before {
  content: "";
  width: 11px;
  height: 11px;
  border-radius: 50%;
  background: #e6e8ee;
  margin: 0 15px 0 6px;
}
.n {
  width: 32px;
}
.tick {
  width: 28px;
  height: 28px;
  margin: -1px 7px 0 0;
}
.message .codes {
  margin: -25px 0 0 30px;
  display: flex;
  flex-direction: column;
  gap: 8px;
}
.message .codes li {
  height: 49.6px;
}
.codes li::before {
  margin: 0 24px 0 7px;
}
.codes code {
  font: 26px "DejaVu Sans Mono", monospace;
  color: #cc7c32;
}
.message .tail {
  margin-top: -32px;
}
.ruler {
  width: 27px;
  height: 27px;
  margin-left: 5px;
}
.stars {
  width: 26px;
  height: 26px;
  margin-left: 3px;
}
.checkpoint {
  margin: 9px 0 0 20px;
  width: 884px;
  height: 188px;
  border-radius: 16px;
  background: #22252d;
  padding: 16px;
  font-size: 25px;
  color: #bfc3ca;
}
.cp-row {
  height: 36px;
  display: flex;
  align-items: center;
}
.cp-row svg {
  width: 30px;
  height: 30px;
  margin: 0 13px 0 1px;
}
.green {
  color: #7ed77f;
  stroke-width: 1.8;
}
.cp-title {
  height: 44px;
  line-height: 44px;
  font-size: 28px;
  color: #f0f2f6;
  margin-top: 10.5px;
  margin-bottom: 9.5px;
}
.cp-actions {
  display: flex;
  gap: 16px;
}
.cp-actions button {
  height: 56px;
  border-radius: 8px;
  background: #2b2e36;
}
.cp-actions svg {
  width: 24px;
  height: 24px;
  margin: 0 8px 0 18px;
}
.b1 {
  width: 215px;
}
.b2 {
  width: 161px;
}
.b3 {
  width: 153px;
}
.work {
  margin: 28px 0 0 20px;
  width: 884px;
  height: 68px;
  border-radius: 16px;
  background: #22252d;
  display: flex;
  align-items: center;
  font-size: 25px;
  color: #bfc3ca;
}
.work svg {
  width: 30px;
  height: 30px;
  margin: 0 16px 0 17px;
}
.work .w-chev {
  width: 27px;
  height: 27px;
  margin: 0 18px 0 auto;
}
.composer {
  margin: 44px 0 0 12px;
  width: 900px;
  height: 150px;
  border: 2px solid #2e7bee;
  border-radius: 12px;
  background: #22252d;
}
.ph {
  height: 80px;
  line-height: 77px;
  padding-left: 20px;
  font-size: 28px;
  color: #9a9ea6;
}
.cbar {
  height: 48px;
  margin-top: 6px;
  display: flex;
  align-items: center;
  color: #c8ccd4;
}
.build {
  width: 160px;
  height: 48px;
  margin-left: 12px;
  border-radius: 8px;
  background: #2b2e36;
  display: flex;
  align-items: center;
  font-size: 26px;
  color: #f0f2f6;
}
.build svg {
  width: 30px;
  height: 30px;
  margin: 0 9px 0 11px;
}
.build .caret {
  width: 19px;
  height: 19px;
  margin: 0 0 0 24px;
}
.i-sel {
  width: 33px;
  height: 33px;
  margin-left: 15px;
}
.i-clip {
  width: 30px;
  height: 30px;
  margin-left: 25px;
}
.i-slid {
  width: 31px;
  height: 31px;
  margin-left: auto;
}
.i-up {
  width: 24px;
  height: 24px;
  margin: 0 24px 0 37px;
}

/* Right pane */
.right {
  flex: 1;
  display: flex;
  flex-direction: column;
}
.pane-tabs {
  height: 80px;
  display: flex;
  align-items: center;
  color: #b0b4bc;
  font-size: 28px;
}
.ptab {
  width: 320px;
  height: 56px;
  margin-right: 8px;
  border-radius: 8px;
  display: flex;
  align-items: center;
}
.ptab.on {
  background: #22252d;
  color: #f0f2f6;
}
.p-x {
  width: 22px;
  height: 22px;
  margin: 0 17px 0 auto;
  color: #7d8189;
}
.p-mon {
  width: 31px;
  height: 31px;
  margin: 0 12px 0 13px;
}
.ts {
  width: 28px;
  height: 28px;
  margin: 0 14px 0 14px;
  background: #3b8fb0;
  color: #14222b;
  font: 700 16px/32px "Open Sans", sans-serif;
  text-align: right;
  padding-right: 2px;
}
.p-con {
  width: 27px;
  height: 27px;
  margin: 0 15px 0 14px;
  color: #e8d27a;
  stroke-width: 2;
}
.p-plus {
  width: 31px;
  height: 31px;
  margin-left: 12px;
  stroke-width: 1.5;
}
.p-search {
  width: 29px;
  height: 29px;
  margin-left: auto;
  color: #e6e8ee;
}
.access,
.publish {
  height: 56px;
  border-radius: 8px;
  font-size: 25px;
  color: #eceef3;
}
.access {
  width: 144px;
  margin-left: 22px;
  background: #22252d;
}
.access svg {
  width: 26px;
  height: 26px;
  margin: 0 7px 0 17px;
}
.publish {
  width: 148px;
  margin-left: 8px;
  background: #1f56a8;
}
.publish svg {
  width: 26px;
  height: 26px;
  margin: 0 8px 0 17px;
}
.p-lay {
  width: 31px;
  height: 31px;
  margin: 0 24px 0 21px;
  color: #e6e8ee;
}
.pane {
  width: 1944px;
  height: 1546px;
  border: 1px solid #3a3d46;
  border-radius: 8px;
  overflow: hidden;
}
.pbar {
  height: 71px;
  display: flex;
  align-items: center;
  color: #a9adb5;
  padding-left: 18px;
}
.pbar svg {
  stroke-width: 1.7;
}
.n1,
.n2 {
  width: 25px;
  height: 25px;
}
.n2 {
  margin-left: 32px;
}
.pbar .n3 {
  width: 31px;
  height: 31px;
  margin-left: 28px;
  color: #e6e8ee;
  stroke-width: 1.9;
}
.addr {
  width: 1600px;
  height: 48px;
  margin-left: 16px;
  border-radius: 8px;
  background: #22252d;
  display: flex;
  align-items: center;
  font-size: 28px;
}
.addr b {
  font-weight: 400;
  color: #f0f2f6;
}
.addr svg {
  width: 25px;
  height: 25px;
  margin: 0 4px 0 8px;
}
.n4,
.n5,
.n6 {
  width: 30px;
  height: 30px;
}
.n4 {
  margin-left: 18px;
}
.n5 {
  margin-left: 21px;
}
.n6 {
  margin-left: 22px;
}
.webview {
  display: flex;
  height: 1473px;
  background: #fff;
  color: #020817;
  font-family: Inter, "Noto Sans", sans-serif;
}
.side {
  width: 639px;
  height: 1473px;
  flex: none;
  border-right: 2px solid #e2e6ec;
  display: flex;
  flex-direction: column;
  overflow: hidden;
}
.intro {
  height: 322px;
  flex: none;
  padding: 49px 48px 0 47px;
  border-bottom: 2px solid #e3e6eb;
}
.intro h1 {
  font-size: 46px;
  line-height: 64px;
  font-weight: 700;
  color: #111827;
}
.intro p {
  margin-top: 16px;
  font-size: 27px;
  line-height: 40px;
  color: #4b5563;
}
.scroll {
  flex: 1;
  min-height: 0;
  display: flex;
}
.cards {
  width: 625px;
  padding: 48px 48px 0 47px;
  display: flex;
  flex-direction: column;
  gap: 48px;
}
.rail {
  width: 12px;
  background: #f1f5f9;
}
.rail i {
  display: block;
  height: 683px;
  border-radius: 6px;
  background: #cbd3e0;
}
.card {
  height: 444px;
  flex: none;
  border: 2px solid #e2e8f0;
  border-radius: 24px;
  padding: 48px;
  box-shadow: 0 2px 4px rgba(0, 0, 0, 0.06);
  font-size: 27px;
}
.card h2 {
  font-size: 34px;
  line-height: 57px;
  height: 56px;
  font-weight: 600;
}
.card label {
  display: block;
  margin: 60px 0 24px;
  height: 28px;
  line-height: 30px;
  font-weight: 500;
}
.field {
  height: 72px;
  line-height: 70px;
  border: 2px solid #dfe6f1;
  border-radius: 12px;
  background: #e8eefc;
  padding-left: 24px;
  color: #000;
}
.primary,
.outline {
  width: 430px;
  height: 72px;
  border-radius: 12px;
  justify-content: center;
  font-weight: 500;
}
.primary {
  margin-top: 32px;
  background: #3366e3;
  color: #f8fafc;
  font-weight: 400;
  box-shadow: 0 2px 3px rgba(0, 0, 0, 0.1);
}
.outline {
  margin-top: 48px;
  background: #fff;
  border: 2px solid #e2e8f0;
}
.hints {
  margin-top: 32px;
  display: flex;
  flex-direction: column;
  gap: 8px;
  color: #4b5563;
}
.hints li {
  height: 40px;
  display: flex;
  align-items: center;
}
.hints i {
  width: 20px;
  padding-left: 2px;
  font: 20px "Liberation Sans", sans-serif;
}
.hints b {
  margin-right: 9px;
}
.last {
  display: flex;
  justify-content: space-between;
}
.badge {
  width: 216px;
  height: 76px;
  margin-top: 18px;
  padding: 6px 0 0 23px;
  border-radius: 12px;
  background: #f1f5f9;
  font-size: 24px;
  line-height: 32px;
  font-weight: 600;
}
.stage {
  width: 1303px;
  height: 1473px;
  background: #f9fafc;
}
.minor {
  stroke: #e0e2e5;
  stroke-width: 1;
}
.major {
  stroke: #686f80;
  stroke-width: 1.3;
}
.edge {
  stroke: #d0d3d8;
  stroke-width: 1.2;
}
.wire {
  stroke: #000;
  stroke-width: 1.3;
  fill: none;
}
.dot {
  fill: #e7362a;
}
.vl {
  font-family: "Noto Sans", sans-serif;
  text-anchor: middle;
  fill: #000;
  stroke: #e3e3e3;
  stroke-width: 21px;
  stroke-linejoin: round;
  paint-order: stroke;
}
</style>
